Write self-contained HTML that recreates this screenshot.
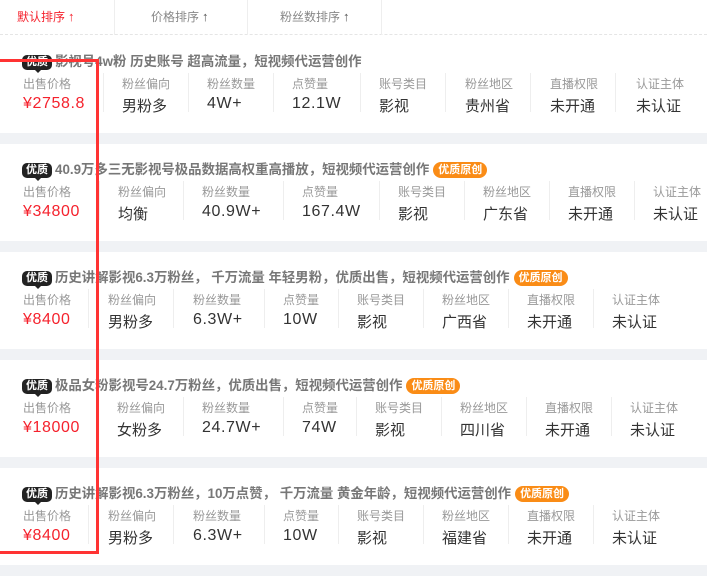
<!DOCTYPE html>
<html><head><meta charset="utf-8"><style>
*{margin:0;padding:0;box-sizing:border-box}
body{width:707px;height:569px;overflow:hidden;background:#fff;font-family:"Liberation Sans","Noto Sans CJK SC",sans-serif;position:relative}
.hd{position:absolute;left:0;top:0;width:707px;height:35px;border-bottom:1px dashed #e5e5e5}
.tab{position:absolute;top:0;height:35px;line-height:33px;font-size:12px;color:#888}
.tab b{font-size:13px;margin-left:3px}
.vd{position:absolute;top:0;height:35px;width:1px;background:#eee}
.sep{position:absolute;left:0;width:707px;height:11px;background:#f0f2f5}
.card{position:absolute;left:0;width:707px;height:97px}
.t{position:absolute;left:22px;top:18px;font-size:13.4px;font-weight:bold;color:#777;white-space:nowrap;line-height:16px}
.b{display:inline-block;background:#222;color:#fff;border-radius:5px;font-size:11px;padding:0 4px;height:15px;line-height:15px;margin-right:3px;position:relative;vertical-align:1px}
.b:after{content:"";position:absolute;left:13px;bottom:-3px;border:3px solid transparent;border-top-color:#222;border-bottom:0}
.o{display:inline-block;background:#fa8c16;color:#fff;border-radius:8px;font-size:11px;padding:0 5px;height:16px;line-height:16px;margin-left:4px;vertical-align:1px}
.l{position:absolute;top:39px;font-size:12px;color:#999;white-space:nowrap}
.v{position:absolute;top:59px;font-size:15px;color:#333;white-space:nowrap}
.n{font-size:16px;letter-spacing:0.6px;top:59px}
.p{color:#f5222d}
.d{position:absolute;top:37px;height:39px;width:1px;background:#eee}
.red{position:absolute;left:-5px;top:59px;width:104px;height:495px;border:3px solid #f33}
</style></head><body>
<div class="hd">
<div class="tab" style="left:17px;color:#f5222d">默认排序<b>↑</b></div>
<div class="vd" style="left:114px"></div>
<div class="tab" style="left:151px">价格排序<b style="color:#555">↑</b></div>
<div class="vd" style="left:247px"></div>
<div class="tab" style="left:280px">粉丝数排序<b style="color:#555">↑</b></div>
<div class="vd" style="left:381px"></div>
</div>

<div class="card" style="top:36px">
<div class="t"><span class="b">优质</span>影视号4w粉 历史账号 超高流量，短视频代运营创作</div>
<div class="l" style="left:23px">出售价格</div><div class="v p n" style="left:23px">¥2758.8</div>
<div class="d" style="left:103px"></div><div class="l" style="left:122px">粉丝偏向</div><div class="v" style="left:122px">男粉多</div>
<div class="d" style="left:188px"></div><div class="l" style="left:207px">粉丝数量</div><div class="v n" style="left:207px">4W+</div>
<div class="d" style="left:273px"></div><div class="l" style="left:292px">点赞量</div><div class="v n" style="left:292px">12.1W</div>
<div class="d" style="left:360px"></div><div class="l" style="left:379px">账号类目</div><div class="v" style="left:379px">影视</div>
<div class="d" style="left:445px"></div><div class="l" style="left:465px">粉丝地区</div><div class="v" style="left:465px">贵州省</div>
<div class="d" style="left:530px"></div><div class="l" style="left:550px">直播权限</div><div class="v" style="left:550px">未开通</div>
<div class="d" style="left:615px"></div><div class="l" style="left:636px">认证主体</div><div class="v" style="left:636px">未认证</div>
</div>
<div class="sep" style="top:133px"></div>

<div class="card" style="top:144px">
<div class="t"><span class="b">优质</span>40.9万多三无影视号极品数据高权重高播放，短视频代运营创作<span class="o">优质原创</span></div>
<div class="l" style="left:23px">出售价格</div><div class="v p n" style="left:23px">¥34800</div>
<div class="d" style="left:99px"></div><div class="l" style="left:118px">粉丝偏向</div><div class="v" style="left:118px">均衡</div>
<div class="d" style="left:183px"></div><div class="l" style="left:202px">粉丝数量</div><div class="v n" style="left:202px">40.9W+</div>
<div class="d" style="left:283px"></div><div class="l" style="left:302px">点赞量</div><div class="v n" style="left:302px">167.4W</div>
<div class="d" style="left:379px"></div><div class="l" style="left:398px">账号类目</div><div class="v" style="left:398px">影视</div>
<div class="d" style="left:464px"></div><div class="l" style="left:483px">粉丝地区</div><div class="v" style="left:483px">广东省</div>
<div class="d" style="left:549px"></div><div class="l" style="left:568px">直播权限</div><div class="v" style="left:568px">未开通</div>
<div class="d" style="left:634px"></div><div class="l" style="left:653px">认证主体</div><div class="v" style="left:653px">未认证</div>
</div>
<div class="sep" style="top:241px"></div>

<div class="card" style="top:252px">
<div class="t"><span class="b">优质</span>历史讲解影视6.3万粉丝， 千万流量 年轻男粉，优质出售，短视频代运营创作<span class="o">优质原创</span></div>
<div class="l" style="left:23px">出售价格</div><div class="v p n" style="left:23px">¥8400</div>
<div class="d" style="left:88px"></div><div class="l" style="left:108px">粉丝偏向</div><div class="v" style="left:108px">男粉多</div>
<div class="d" style="left:173px"></div><div class="l" style="left:193px">粉丝数量</div><div class="v n" style="left:193px">6.3W+</div>
<div class="d" style="left:264px"></div><div class="l" style="left:283px">点赞量</div><div class="v n" style="left:283px">10W</div>
<div class="d" style="left:338px"></div><div class="l" style="left:357px">账号类目</div><div class="v" style="left:357px">影视</div>
<div class="d" style="left:423px"></div><div class="l" style="left:442px">粉丝地区</div><div class="v" style="left:442px">广西省</div>
<div class="d" style="left:508px"></div><div class="l" style="left:527px">直播权限</div><div class="v" style="left:527px">未开通</div>
<div class="d" style="left:593px"></div><div class="l" style="left:612px">认证主体</div><div class="v" style="left:612px">未认证</div>
</div>
<div class="sep" style="top:349px"></div>

<div class="card" style="top:360px">
<div class="t"><span class="b">优质</span>极品女粉影视号24.7万粉丝，优质出售，短视频代运营创作<span class="o">优质原创</span></div>
<div class="l" style="left:23px">出售价格</div><div class="v p n" style="left:23px">¥18000</div>
<div class="d" style="left:98px"></div><div class="l" style="left:117px">粉丝偏向</div><div class="v" style="left:117px">女粉多</div>
<div class="d" style="left:183px"></div><div class="l" style="left:202px">粉丝数量</div><div class="v n" style="left:202px">24.7W+</div>
<div class="d" style="left:283px"></div><div class="l" style="left:302px">点赞量</div><div class="v n" style="left:302px">74W</div>
<div class="d" style="left:356px"></div><div class="l" style="left:375px">账号类目</div><div class="v" style="left:375px">影视</div>
<div class="d" style="left:441px"></div><div class="l" style="left:460px">粉丝地区</div><div class="v" style="left:460px">四川省</div>
<div class="d" style="left:526px"></div><div class="l" style="left:545px">直播权限</div><div class="v" style="left:545px">未开通</div>
<div class="d" style="left:611px"></div><div class="l" style="left:630px">认证主体</div><div class="v" style="left:630px">未认证</div>
</div>
<div class="sep" style="top:457px"></div>

<div class="card" style="top:468px">
<div class="t"><span class="b">优质</span>历史讲解影视6.3万粉丝，10万点赞， 千万流量 黄金年龄，短视频代运营创作<span class="o">优质原创</span></div>
<div class="l" style="left:23px">出售价格</div><div class="v p n" style="left:23px">¥8400</div>
<div class="d" style="left:88px"></div><div class="l" style="left:108px">粉丝偏向</div><div class="v" style="left:108px">男粉多</div>
<div class="d" style="left:173px"></div><div class="l" style="left:193px">粉丝数量</div><div class="v n" style="left:193px">6.3W+</div>
<div class="d" style="left:264px"></div><div class="l" style="left:283px">点赞量</div><div class="v n" style="left:283px">10W</div>
<div class="d" style="left:338px"></div><div class="l" style="left:357px">账号类目</div><div class="v" style="left:357px">影视</div>
<div class="d" style="left:423px"></div><div class="l" style="left:442px">粉丝地区</div><div class="v" style="left:442px">福建省</div>
<div class="d" style="left:508px"></div><div class="l" style="left:527px">直播权限</div><div class="v" style="left:527px">未开通</div>
<div class="d" style="left:593px"></div><div class="l" style="left:612px">认证主体</div><div class="v" style="left:612px">未认证</div>
</div>
<div class="sep" style="top:565px"></div>

<div class="red"></div>
</body></html>
